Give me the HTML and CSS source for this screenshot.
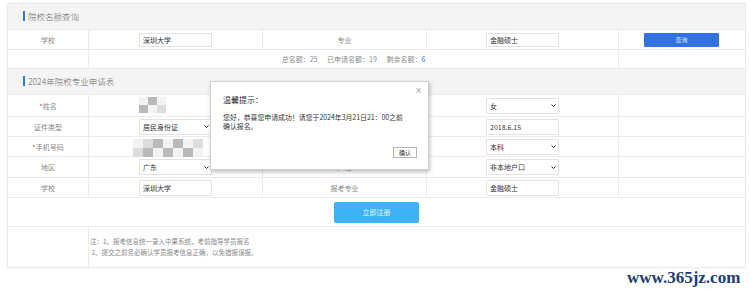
FILE: index.html
```html
<!DOCTYPE html>
<html>
<head>
  <meta charset="utf-8">
  <meta name="viewport" content="width=device-width, initial-scale=1.0">
  <title>院校名额查询</title>
  <link rel="stylesheet" href="styles.css">
</head>
<body>
  <div class="page">
    <table class="grid">
      <colgroup>
        <col class="c1"><col class="c2"><col class="c3"><col class="c4"><col class="c5">
      </colgroup>

      <!-- 院校名额查询 -->
      <tr class="section">
        <td colspan="5"><span class="section-title">院校名额查询</span></td>
      </tr>
      <tr class="row-query">
        <td class="label">学校</td>
        <td><div class="field input">深圳大学</div></td>
        <td class="label">专业</td>
        <td><div class="field input">金融硕士</div></td>
        <td><button class="query-button">查询</button></td>
      </tr>
      <tr class="row-stats">
        <td></td>
        <td colspan="3" class="stats">
          <span>总名额：25</span>
          <span>已申请名额：19</span>
          <span>剩余名额：<em>6</em></span>
        </td>
        <td></td>
      </tr>

      <!-- 申请表 -->
      <tr class="section">
        <td colspan="5"><span class="section-title">2024年院校专业申请表</span></td>
      </tr>
      <tr class="row-form first">
        <td class="label"><i>*</i>姓名</td>
        <td>
          <div class="field plain">
            <div class="mosaic name">
              <b class="m1"></b><b class="m3"></b><b class="m1"></b>
              <b class="m3"></b><b class="m1"></b><b class="m2"></b>
            </div>
          </div>
        </td>
        <td class="label">性别</td>
        <td><div class="field select"><span>女</span><svg viewBox="0 0 10 6"><path d="M1 1l4 4 4-4" /></svg></div></td>
        <td></td>
      </tr>
      <tr class="row-form">
        <td class="label">证件类型</td>
        <td><div class="field select"><span>居民身份证</span><svg viewBox="0 0 10 6"><path d="M1 1l4 4 4-4" /></svg></div></td>
        <td class="label">出生日期</td>
        <td><div class="field input">2018.6.15</div></td>
        <td></td>
      </tr>
      <tr class="row-form">
        <td class="label"><i>*</i>手机号码</td>
        <td>
          <div class="field plain">
            <div class="mosaic phone">
              <b class="m1"></b><b class="m2"></b><b class="m3"></b><b class="m1"></b><b class="m3"></b><b class="m1"></b><b class="m2"></b>
              <b class="m2"></b><b class="m3"></b><b class="m1"></b><b class="m3"></b><b class="m1"></b><b class="m3"></b><b class="m1"></b>
            </div>
          </div>
        </td>
        <td class="label">学历</td>
        <td><div class="field select"><span>本科</span><svg viewBox="0 0 10 6"><path d="M1 1l4 4 4-4" /></svg></div></td>
        <td></td>
      </tr>
      <tr class="row-form tall">
        <td class="label">地区</td>
        <td><div class="field select"><span>广东</span><svg viewBox="0 0 10 6"><path d="M1 1l4 4 4-4" /></svg></div></td>
        <td class="label">户籍</td>
        <td><div class="field select"><span>非本地户口</span><svg viewBox="0 0 10 6"><path d="M1 1l4 4 4-4" /></svg></div></td>
        <td></td>
      </tr>
      <tr class="row-form">
        <td class="label">学校</td>
        <td><div class="field input">深圳大学</div></td>
        <td class="label">报考专业</td>
        <td><div class="field input">金融硕士</div></td>
        <td></td>
      </tr>
      <tr class="row-submit">
        <td colspan="5"><button class="submit-button">立即注册</button></td>
      </tr>
      <tr class="row-notes">
        <td></td>
        <td colspan="4" class="notes">
          注：1、报考信息统一录入中果系统，考前指导学员报名<br>
          &nbsp;2、提交之前务必确认学员报考信息正确，以免错报误报。
        </td>
      </tr>
    </table>
  </div>

  <!-- 温馨提示弹窗 -->
  <div class="dialog">
    <span class="dialog-close">X</span>
    <div class="dialog-title">温馨提示：</div>
    <div class="dialog-body">
      您好，恭喜您申请成功！请您于2024年3月21日21：00之前<br>确认报名。
    </div>
    <div class="dialog-actions">
      <button class="confirm-button">确认</button>
    </div>
  </div>

  <div class="watermark">www.365jz.com</div>
</body>
</html>
```

FILE: styles.css
```css
body {
  margin: 0;
  background-color: #fff;
  font-family: "Noto Sans CJK SC", "Noto Sans", sans-serif;
  color: #666;
  position: relative;
  width: 750px;
  height: 297px;
  overflow: hidden;
}

.page {
  margin: 3px 0 0 7px;
  width: 738px;
  box-shadow: 0 0 2px rgba(0, 0, 0, 0.08);
}

.grid {
  width: 738px;
  table-layout: fixed;
  border-collapse: collapse;
  border: 1px solid #ececec;
}

.grid col.c1 { width: 81px; }
.grid col.c2 { width: 174px; }
.grid col.c3 { width: 164px; }
.grid col.c4 { width: 192px; }
.grid col.c5 { width: 127px; }

.grid td {
  border: 1px solid #ebebeb;
  padding: 0;
  font-size: 7px;
  line-height: 10px;
  text-align: center;
  vertical-align: middle;
}

/* section header rows */
.section td {
  height: 25px;
  background-color: #f4f4f4;
  text-align: left;
  padding-left: 15px;
}

.section-title {
  display: inline-block;
  border-left: 2px solid #2c7be5;
  padding-left: 3px;
  font-size: 8.5px;
  font-weight: 300;
  line-height: 10px;
  color: #6a6a6a;
}

.row-query td { height: 19px; }
.row-stats td { height: 18px; }
.row-form td { height: 19px; }
.row-form.first td { height: 21px; }
.row-form.tall td { height: 20px; }
.row-submit td { height: 28px; }
.row-notes td { height: 40px; }

.label {
  color: #888;
}

.label i {
  font-style: normal;
  color: #e0463a;
}

/* inputs and selects */
.field {
  box-sizing: border-box;
  width: 73px;
  height: 14px;
  margin: 0 auto;
  padding: 0 3px;
  border: 1px solid #e2e2e2;
  border-radius: 1px;
  background-color: #fff;
  color: #333;
  font-size: 7px;
  line-height: 12px;
  text-align: left;
  white-space: nowrap;
}

.field.plain {
  border: none;
  padding: 0;
  height: 17px;
}

.field.select {
  display: flex;
  align-items: center;
  justify-content: space-between;
  padding-right: 2px;
}

.field.select svg {
  width: 5px;
  height: 3px;
  fill: none;
  stroke: #333;
  stroke-width: 2;
}

.row-form .field.input,
.row-form .field.select {
  height: 16px;
  line-height: 14px;
}

.query-button {
  display: block;
  width: 75px;
  height: 14px;
  margin: 0 0 0 25px;
  border: none;
  border-radius: 1px;
  background-color: #2f72e0;
  color: #dce6f8;
  font-family: inherit;
  font-size: 6px;
  padding: 0;
}

.stats {
  color: #888;
}

.stats span {
  margin: 0 4px;
}

.stats em {
  font-style: normal;
  color: #2c7be5;
}

/* blurred personal data */
.mosaic {
  display: grid;
  filter: blur(0.7px);
}

.mosaic.name {
  grid-template-columns: repeat(3, 9px);
  grid-template-rows: repeat(2, 8px);
  width: 27px;
}

.mosaic.phone {
  grid-template-columns: repeat(7, 10px);
  grid-template-rows: repeat(2, 9px);
  width: 70px;
  margin: 1px 0 0 -6px;
}

.mosaic .m1 { background-color: #f2f2f2; }
.mosaic .m2 { background-color: #dcdcdc; }
.mosaic .m3 { background-color: #b9b9b9; }

.submit-button {
  display: block;
  width: 85px;
  height: 21px;
  margin: 0 auto;
  border: none;
  border-radius: 2px;
  background-color: #3db2f6;
  color: #e8f6ff;
  font-family: inherit;
  font-size: 7px;
  padding: 0;
}

.notes {
  text-align: left !important;
  padding-left: 1px !important;
  color: #888;
  font-size: 6.5px !important;
  line-height: 11px !important;
}

/* dialog */
.dialog {
  position: absolute;
  left: 210px;
  top: 81px;
  box-sizing: border-box;
  width: 219px;
  height: 89px;
  padding: 12px 12px 0 12px;
  background-color: #fff;
  border: 1px solid #d0d0d0;
  box-shadow: 1px 2px 4px rgba(0, 0, 0, 0.25);
}

.dialog-close {
  position: absolute;
  top: 5px;
  right: 7px;
  font-family: "Liberation Sans", sans-serif;
  font-size: 7px;
  color: #888;
}

.dialog-title {
  font-size: 8px;
  line-height: 12px;
  color: #333;
}

.dialog-body {
  margin-top: 7px;
  font-size: 6.9px;
  line-height: 9px;
  color: #333;
  white-space: nowrap;
}

.dialog-actions {
  display: flex;
  justify-content: flex-end;
  margin-top: 16px;
}

.confirm-button {
  width: 24px;
  height: 11px;
  padding: 0;
  margin-right: -1px;
  border: 1px solid #b5b5b5;
  background-color: #fff;
  color: #333;
  font-family: inherit;
  font-size: 6px;
  line-height: 9px;
}

.watermark {
  position: absolute;
  left: 627px;
  top: 268px;
  font-family: "Liberation Serif", serif;
  font-weight: bold;
  font-size: 17px;
  color: #1d3c78;
}
```
